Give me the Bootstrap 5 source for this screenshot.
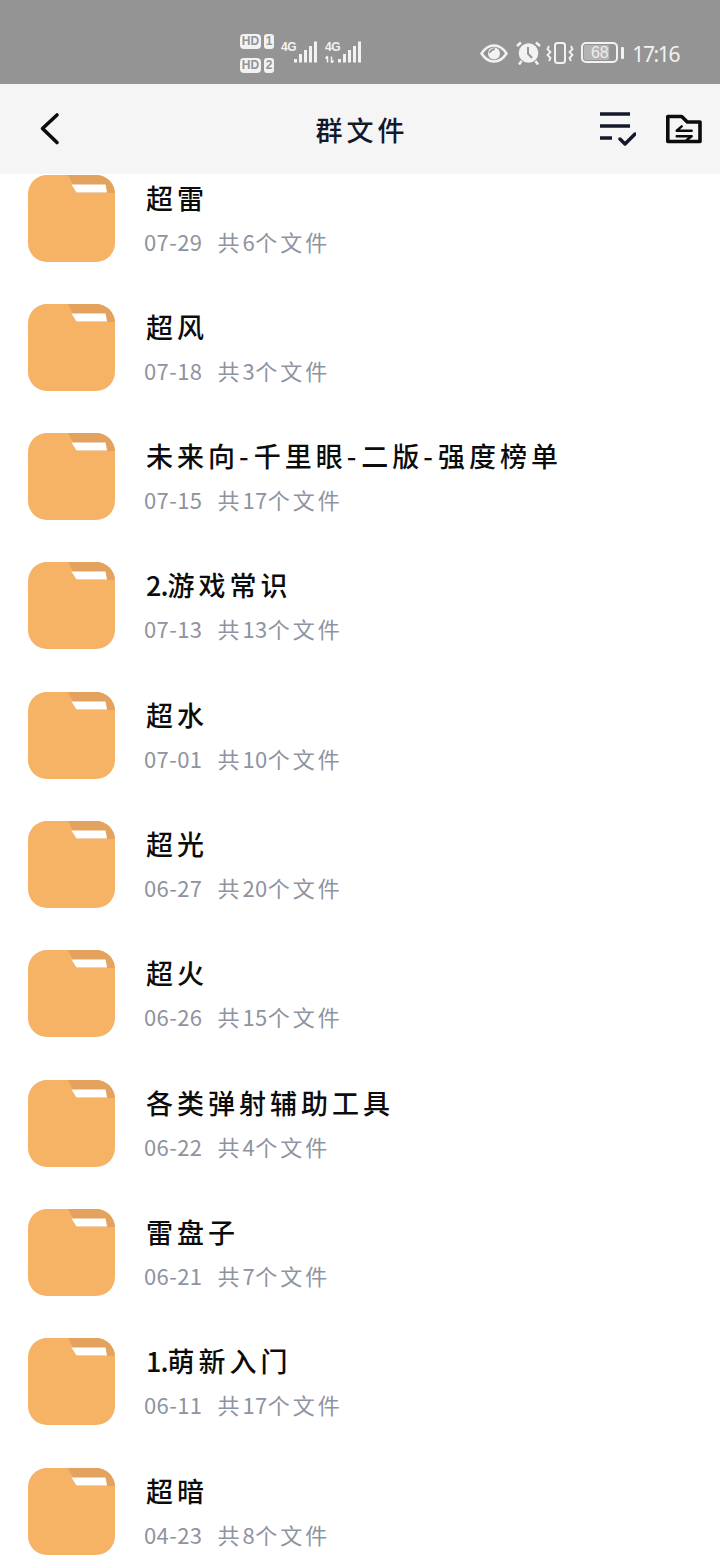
<!DOCTYPE html>
<html lang="zh-CN">
<head>
    <meta charset="UTF-8">
    <meta name="viewport" content="width=device-width, initial-scale=1.0">
    <title>群文件</title>
    <link href="https://cdn.jsdelivr.net/npm/bootstrap@5.3.0/dist/css/bootstrap.min.css" rel="stylesheet">
    <style>
        body {
            width: 720px;
            height: 1560px;
            overflow: hidden;
            background-color: #fff;
            font-family: "Liberation Sans", "Noto Sans CJK SC", sans-serif;
        }
        .status-strip {
            height: 84px;
            background-color: #949494;
            color: #f2f2f2;
        }
        .status-strip svg { display: block; flex: none; }
        .sim-group { padding-left: 240px; padding-top: 34px; gap: 5px; }
        .sim-row { gap: 3px; height: 15px; margin-bottom: 9px; }
        .hd-tag, .sim-no {
            background-color: #f2f2f2;
            color: #949494;
            border-radius: 4px;
            height: 15px;
            line-height: 15px;
            font-size: 12px;
            font-weight: 700;
            text-align: center;
        }
        .hd-tag { width: 21px; }
        .sim-no { width: 10px; border-radius: 3px; }
        .signal-set { width: 122px; position: relative; top: -1px; }
        .net-label {
            position: absolute;
            font-size: 12px;
            font-weight: 700;
            line-height: 10px;
            letter-spacing: -.4px;
        }
        .clock-text {
            font-family: "Noto Sans", sans-serif;
            font-size: 21px;
            line-height: 28px;
            letter-spacing: -1.4px;
            margin-left: 8px;
        }
        .status-right { padding: 40px 41px 0 0; }
        .eye-icon { margin-top: 4px; }
        .alarm-icon { margin-left: 7px; }
        .buzz-icon { margin-left: 5px; }
        .cell-level {
            position: absolute;
            left: 1px;
            top: 1px;
            width: 25px;
            height: 15px;
            border-radius: 2px;
            background-color: #b3b3b3;
        }
        .battery-box {
            position: relative;
            width: 37px;
            height: 21px;
            border: 2px solid #f2f2f2;
            border-radius: 5px;
            margin-left: 7px;
            margin-top: 2px;
        }
        .battery-num {
            position: absolute;
            inset: 0;
            color: #ececec;
            font-size: 16px;
            line-height: 17px;
            text-align: center;
        }
        .battery-nub {
            width: 3px;
            height: 12px;
            margin: 7px 0 0 3px;
            background-color: #f2f2f2;
            border-radius: 1px;
        }
        .title-bar {
            height: 90px;
            background-color: #f5f5f5;
            padding: 0 18px 0 38px;
        }
        .page-name {
            position: absolute;
            left: 0;
            right: 0;
            top: 112px;
            padding-left: 4px;
            text-align: center;
            font-family: "Noto Sans CJK SC", sans-serif;
            font-size: 27px;
            font-weight: 500;
            line-height: 36px;
            letter-spacing: 4px;
            color: #14182b;
        }
        .file-list { padding: .5px 0 0 28px; }
        .file-row { height: 129.33px; gap: 29px; }
        .folder-pic { flex: none; width: 87px; height: 87px; }
        .file-name {
            margin: 4px 0 0 2px;
            font-family: "Noto Sans CJK SC", sans-serif;
            font-size: 27px;
            font-weight: 500;
            line-height: 38px;
            letter-spacing: 4px;
            color: #0c0c0c;
            white-space: nowrap;
        }
        .file-name i { font-style: normal; letter-spacing: 5px; }
        .file-name u { text-decoration: none; letter-spacing: -1px; }
        .file-meta {
            margin-top: 8px;
            font-family: "Noto Sans CJK SC", sans-serif;
            font-size: 22px;
            line-height: 32px;
            letter-spacing: .4px;
            color: #8f93a1;
            white-space: nowrap;
        }
        .file-meta b { font-weight: 400; letter-spacing: 3px; }
        .file-meta time { margin-right: 15px; }
    </style>
</head>
<body>
    <svg width="0" height="0" class="position-absolute">
        <symbol id="folder" viewBox="0 0 87 87">
            <rect width="87" height="87" rx="19" fill="#f6b365"/>
            <path d="M40 0H68A19 19 0 0 1 87 19V18H49Z" fill="#e3a35f"/>
            <path d="M43.500 9.500H77.500L79 17.500H48.500Z" fill="#fff"/>
        </symbol>
    </svg>

    <!-- phone status bar -->
    <div class="status-strip d-flex justify-content-between">
        <div class="d-flex sim-group">
            <div>
                <div class="d-flex sim-row"><span class="hd-tag">HD</span><span class="sim-no">1</span></div>
                <div class="d-flex sim-row"><span class="hd-tag">HD</span><span class="sim-no">2</span></div>
            </div>
            <div class="signal-set">
                <span class="net-label" style="left:2px;top:9px">4G</span>
                <span class="net-label" style="left:46px;top:9px">4G</span>
                <svg width="90" height="30" viewBox="0 0 90 30" class="position-absolute top-0" style="left:0">
                    <g stroke="#f2f2f2" stroke-width="3" fill="none">
                        <path d="M16.500 29.500V26M21.500 29.500V21M26.500 29.500V17M31.500 29.500V13M36.500 29.500V8.500"/>
                        <path d="M60.500 29.500V26M65.500 29.500V21M70.500 29.500V17M75.500 29.500V13M80.500 29.500V8.500"/>
                    </g>
                    <path d="M48.500 29.500V23.500M46.500 25.500L48.500 23M52.500 23.500V29.500M54.500 27.500L52.500 30" stroke="#f2f2f2" stroke-width="1.500" fill="none"/>
                </svg>
            </div>
        </div>
        <div class="d-flex status-right">
            <svg class="eye-icon" width="28" height="20" viewBox="0 0 28 20" fill="none">
                <path d="M1.500 9.500C5 4 9 1.500 14 1.500S23 4 26.500 9.500C23 15 19 17.500 14 17.500S5 15 1.500 9.500Z" stroke="#f2f2f2" stroke-width="2.500"/>
                <circle cx="14" cy="9.500" r="6" fill="#f2f2f2"/>
                <path d="M9.500 9A4.500 4.500 0 0 1 15 5C13 6 11.500 7 9.500 9Z" fill="#949494" stroke="#949494"/>
            </svg>
            <svg class="alarm-icon" width="26" height="26" viewBox="0 0 26 26" fill="none">
                <circle cx="13.500" cy="13" r="9.800" fill="#f2f2f2"/>
                <path d="M13 7V13.500L17 18" stroke="#949494" stroke-width="2"/>
                <path d="M2 6L6 2.500M25 6L21 2.500M6.500 21L4 24.500M20.500 21L23 24.500" stroke="#f2f2f2" stroke-width="2.500"/>
            </svg>
            <svg class="buzz-icon" width="28" height="26" viewBox="0 0 28 26" fill="none" stroke="#f2f2f2">
                <rect x="9" y="3" width="10" height="20" rx="2.500" stroke-width="2"/>
                <path d="M3 6L1.500 9L4.500 12L1.500 15L4.500 18L3 21M25 6L26.500 9L23.500 12L26.500 15L23.500 18L25 21" stroke-width="1.800"/>
            </svg>
            <div class="battery-box">
                <span class="cell-level"></span>
                <span class="battery-num">68</span>
            </div>
            <span class="battery-nub"></span>
            <span class="clock-text">17:16</span>
        </div>
    </div>

    <!-- title bar -->
    <div class="title-bar d-flex align-items-center justify-content-between">
        <svg width="24" height="34" viewBox="0 0 24 34" fill="none" stroke="#0c0c0c" stroke-width="3.600" stroke-linecap="round" stroke-linejoin="round">
            <path d="M19 3L4.500 16.500L19 30.500"/>
        </svg>
        <div class="page-name">群文件</div>
        <div class="d-flex align-items-center" style="gap:28px">
            <svg width="38" height="36" viewBox="0 0 38 36" fill="none" stroke="#14182b" stroke-linecap="round" stroke-linejoin="round">
                <path d="M2 3H32M2 15H32M2 27H14" stroke-width="3.500" stroke-linecap="butt"/>
                <path d="M22 28L27 33L37 23" stroke-width="3.500"/>
            </svg>
            <svg width="38" height="30" viewBox="0 0 38 30" fill="none" stroke="#0c0c0c" stroke-linejoin="round" stroke-linecap="round">
                <path d="M3.800 2.500H17.700L23.300 8H36V27.500H3.800Z" stroke-width="3.600"/>
                <path d="M27.700 16.700H12.700L17.700 12.300M12.700 22.300H27.700L22.700 26" stroke-width="2.400"/>
            </svg>
        </div>
    </div>

    <!-- folder list -->
    <div class="file-list">
        <div class="file-row d-flex"><svg class="folder-pic"><use href="#folder"/></svg><div><div class="file-name">超雷</div><div class="file-meta"><time>07-29</time><b>共</b>6<b>个文件</b></div></div></div>
        <div class="file-row d-flex"><svg class="folder-pic"><use href="#folder"/></svg><div><div class="file-name">超风</div><div class="file-meta"><time>07-18</time><b>共</b>3<b>个文件</b></div></div></div>
        <div class="file-row d-flex"><svg class="folder-pic"><use href="#folder"/></svg><div><div class="file-name">未来向<i>-</i>千里眼<i>-</i>二版<i>-</i>强度榜单</div><div class="file-meta"><time>07-15</time><b>共</b>17<b>个文件</b></div></div></div>
        <div class="file-row d-flex"><svg class="folder-pic"><use href="#folder"/></svg><div><div class="file-name"><u>2.</u>游戏常识</div><div class="file-meta"><time>07-13</time><b>共</b>13<b>个文件</b></div></div></div>
        <div class="file-row d-flex"><svg class="folder-pic"><use href="#folder"/></svg><div><div class="file-name">超水</div><div class="file-meta"><time>07-01</time><b>共</b>10<b>个文件</b></div></div></div>
        <div class="file-row d-flex"><svg class="folder-pic"><use href="#folder"/></svg><div><div class="file-name">超光</div><div class="file-meta"><time>06-27</time><b>共</b>20<b>个文件</b></div></div></div>
        <div class="file-row d-flex"><svg class="folder-pic"><use href="#folder"/></svg><div><div class="file-name">超火</div><div class="file-meta"><time>06-26</time><b>共</b>15<b>个文件</b></div></div></div>
        <div class="file-row d-flex"><svg class="folder-pic"><use href="#folder"/></svg><div><div class="file-name">各类弹射辅助工具</div><div class="file-meta"><time>06-22</time><b>共</b>4<b>个文件</b></div></div></div>
        <div class="file-row d-flex"><svg class="folder-pic"><use href="#folder"/></svg><div><div class="file-name">雷盘子</div><div class="file-meta"><time>06-21</time><b>共</b>7<b>个文件</b></div></div></div>
        <div class="file-row d-flex"><svg class="folder-pic"><use href="#folder"/></svg><div><div class="file-name"><u>1.</u>萌新入门</div><div class="file-meta"><time>06-11</time><b>共</b>17<b>个文件</b></div></div></div>
        <div class="file-row d-flex"><svg class="folder-pic"><use href="#folder"/></svg><div><div class="file-name">超暗</div><div class="file-meta"><time>04-23</time><b>共</b>8<b>个文件</b></div></div></div>
    </div>

    <script src="https://cdn.jsdelivr.net/npm/bootstrap@5.3.0/dist/js/bootstrap.bundle.min.js"></script>
</body>
</html>
